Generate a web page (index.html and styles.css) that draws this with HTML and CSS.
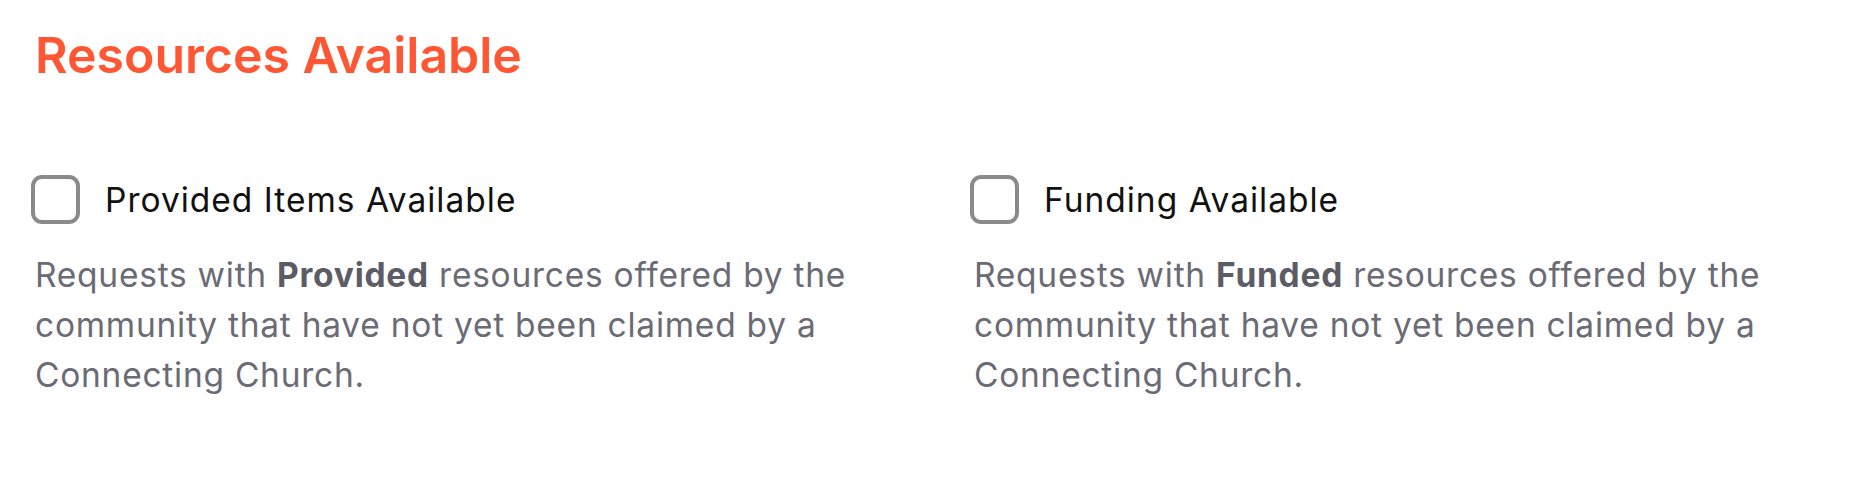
FILE: index.html
```html
<!DOCTYPE html>
<html lang="en">
<head>
    <meta charset="UTF-8">
    <meta name="viewport" content="width=device-width, initial-scale=1.0">
    <title>Resources Available</title>
    <link rel="stylesheet" href="styles.css">
</head>
<body>
    <div class="panel">
        <h2 class="title">Resources Available</h2>

        <div class="options">
            <div class="option">
                <label class="option-row">
                    <span class="checkbox"></span>
                    <span class="option-label">Provided Items Available</span>
                </label>
                <p class="option-desc">Requests with <strong>Provided</strong> resources offered by the community that have not yet been claimed by a Connecting Church.</p>
            </div>

            <div class="option">
                <label class="option-row">
                    <span class="checkbox"></span>
                    <span class="option-label">Funding Available</span>
                </label>
                <p class="option-desc">Requests with <strong>Funded</strong> resources offered by the community that have not yet been claimed by a Connecting Church.</p>
            </div>
        </div>
    </div>
</body>
</html>
```

FILE: styles.css
```css
body {
    margin: 0;
    background: #fff;
    font-family: 'Inter', 'Noto Sans', sans-serif;
    color: #111;
}

.panel {
    padding: 25px 31px 0;
}

.title {
    margin: 0;
    color: #ff5733;
    font-size: 50px;
    line-height: 60px;
    font-weight: 600;
    padding-left: 4px;
}

.options {
    display: grid;
    grid-template-columns: 851px 851px;
    column-gap: 88px;
    margin-top: 90px;
}

.option-row {
    display: flex;
    align-items: center;
    gap: 25px;
    cursor: pointer;
}

.checkbox {
    width: 49px;
    height: 49px;
    box-sizing: border-box;
    border: 4px solid #8a8a8a;
    border-radius: 11px;
    flex-shrink: 0;
}

.option-label {
    font-size: 33.5px;
    line-height: 48px;
    letter-spacing: 1px;
    color: #111;
}

.option-desc {
    margin: 26px 0 0;
    padding-left: 4px;
    font-size: 33.5px;
    line-height: 50px;
    letter-spacing: 0.75px;
    color: #6b6b76;
}

.option-desc strong {
    font-weight: 700;
    color: #5c5c66;
}
```
